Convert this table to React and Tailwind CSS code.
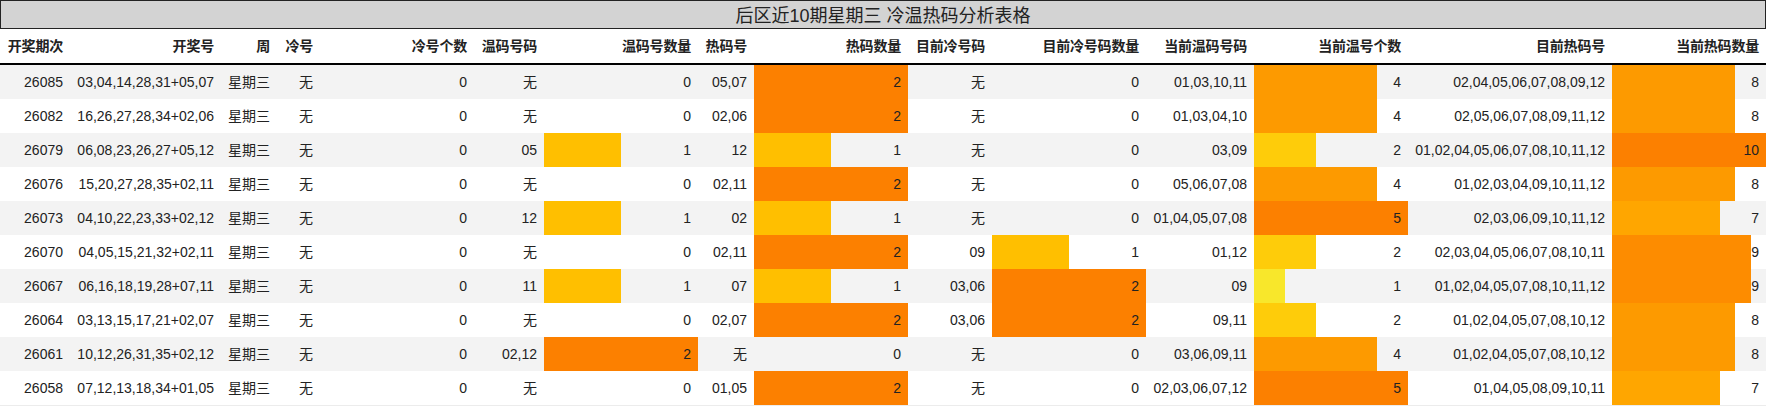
import React from 'react';

const HEADERS = [
  '开奖期次', '开奖号', '周', '冷号', '冷号个数', '温码号码', '温码号数量', '热码号',
  '热码数量', '目前冷号码', '目前冷号码数量', '当前温码号码', '当前温号个数', '目前热码号', '当前热码数量',
];

// column index -> max value of the bar in that column
const BARS = { 4: 0, 6: 2, 8: 2, 10: 2, 12: 5, 14: 10 };

const ROWS = [
  ['26085', '03,04,14,28,31+05,07', '星期三', '无', 0, '无', 0, '05,07', 2, '无', 0, '01,03,10,11', 4, '02,04,05,06,07,08,09,12', 8],
  ['26082', '16,26,27,28,34+02,06', '星期三', '无', 0, '无', 0, '02,06', 2, '无', 0, '01,03,04,10', 4, '02,05,06,07,08,09,11,12', 8],
  ['26079', '06,08,23,26,27+05,12', '星期三', '无', 0, '05', 1, '12', 1, '无', 0, '03,09', 2, '01,02,04,05,06,07,08,10,11,12', 10],
  ['26076', '15,20,27,28,35+02,11', '星期三', '无', 0, '无', 0, '02,11', 2, '无', 0, '05,06,07,08', 4, '01,02,03,04,09,10,11,12', 8],
  ['26073', '04,10,22,23,33+02,12', '星期三', '无', 0, '12', 1, '02', 1, '无', 0, '01,04,05,07,08', 5, '02,03,06,09,10,11,12', 7],
  ['26070', '04,05,15,21,32+02,11', '星期三', '无', 0, '无', 0, '02,11', 2, '09', 1, '01,12', 2, '02,03,04,05,06,07,08,10,11', 9],
  ['26067', '06,16,18,19,28+07,11', '星期三', '无', 0, '11', 1, '07', 1, '03,06', 2, '09', 1, '01,02,04,05,07,08,10,11,12', 9],
  ['26064', '03,13,15,17,21+02,07', '星期三', '无', 0, '无', 0, '02,07', 2, '03,06', 2, '09,11', 2, '01,02,04,05,07,08,10,12', 8],
  ['26061', '10,12,26,31,35+02,12', '星期三', '无', 0, '02,12', 2, '无', 0, '无', 0, '03,06,09,11', 4, '01,02,04,05,07,08,10,12', 8],
  ['26058', '07,12,13,18,34+01,05', '星期三', '无', 0, '无', 0, '01,05', 2, '无', 0, '02,03,06,07,12', 5, '01,04,05,08,09,10,11', 7],
];

const STOPS = [
  [0.2, '#f8e72b'],
  [0.4, '#fecc0a'],
  [0.5, '#ffbf00'],
  [0.7, '#ffa600'],
  [0.8, '#fd9a00'],
  [0.9, '#fd8c00'],
  [1, '#fc8000'],
];

const barColor = (t) => {
  let best = STOPS[0];
  STOPS.forEach((s) => {
    if (Math.abs(s[0] - t) < Math.abs(best[0] - t)) best = s;
  });
  return best[1];
};

const barStyle = (value, max) => {
  if (!max || !value) return undefined;
  const t = value / max;
  const pct = (t * 100).toFixed(2);
  const c = barColor(t);
  return { background: `linear-gradient(90deg, ${c} ${pct}%, transparent ${pct}%)` };
};

const GRID =
  'grid grid-cols-[70px_151px_56px_43px_154px_70px_154px_56px_154px_84px_154px_108px_154px_204px_154px]';

const App = () => {
  return (
    <div className="w-[1766px] bg-white text-[14px] text-[#222] font-['Liberation_Sans','Noto_Sans_CJK_SC',sans-serif]">
      {/* Title */}
      <div className="h-[29px] border border-[#222] bg-[#d3d3d3] flex items-center justify-center text-[18px] leading-none pt-[3px]">
        后区近10期星期三 冷温热码分析表格
      </div>

      {/* Header */}
      <div className={`${GRID} h-[36px] border-b-2 border-black font-bold`}>
        {HEADERS.map((h) => (
          <div key={h} className="flex items-center justify-end pr-[7px] whitespace-nowrap tracking-[-0.2px]">
            {h}
          </div>
        ))}
      </div>

      {/* Rows */}
      {ROWS.map((row, i) => (
        <div key={row[0]} className={`${GRID} h-[34px] ${i % 2 === 0 ? 'bg-[#f3f3f3]' : 'bg-white'}`}>
          {row.map((cell, j) => (
            <div
              key={j}
              style={j in BARS ? barStyle(cell, BARS[j]) : undefined}
              className="flex items-center justify-end pr-[7px] whitespace-nowrap"
            >
              {cell}
            </div>
          ))}
        </div>
      ))}
      <div className="h-px bg-[#ececec]" />
    </div>
  );
};

export default App;
